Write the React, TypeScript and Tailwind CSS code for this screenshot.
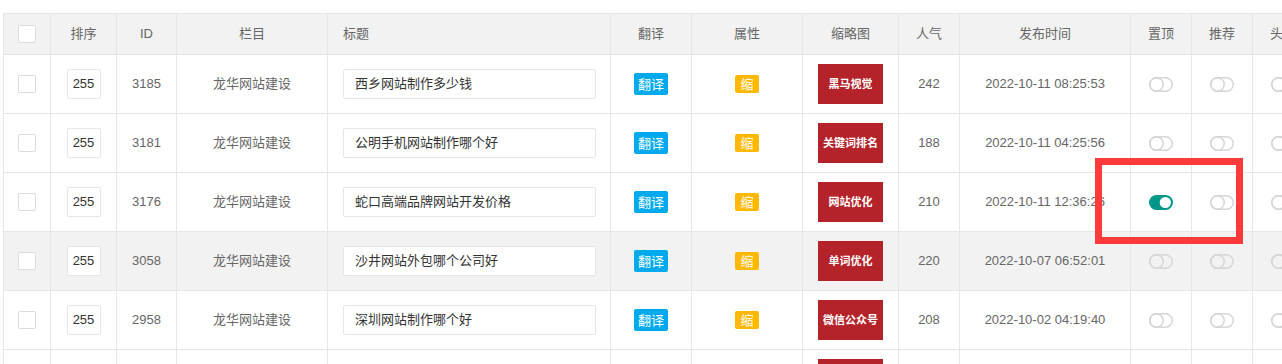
import React from "react";

const cols =
  "grid grid-cols-[47px_66px_60px_151px_283px_81px_111px_96px_61px_171px_61px_61px_61px]";

type Row = {
  id: string;
  title: string;
  thumb: string;
  hits: string;
  time: string;
  top?: boolean;
  hover?: boolean;
};

const rows: Row[] = [
  { id: "3185", title: "西乡网站制作多少钱", thumb: "黑马视觉", hits: "242", time: "2022-10-11 08:25:53" },
  { id: "3181", title: "公明手机网站制作哪个好", thumb: "关键词排名", hits: "188", time: "2022-10-11 04:25:56" },
  { id: "3176", title: "蛇口高端品牌网站开发价格", thumb: "网站优化", hits: "210", time: "2022-10-11 12:36:26", top: true },
  { id: "3058", title: "沙井网站外包哪个公司好", thumb: "单词优化", hits: "220", time: "2022-10-07 06:52:01", hover: true },
  { id: "2958", title: "深圳网站制作哪个好", thumb: "微信公众号", hits: "208", time: "2022-10-02 04:19:40" },
  { id: "2951", title: "宝安网站建设公司", thumb: "网站建设", hits: "196", time: "2022-10-01 10:12:33" },
];

function Toggle({ on }: { on?: boolean }) {
  if (on) {
    return (
      <svg width="24" height="15" viewBox="0 0 24 15">
        <rect x="0" y="0" width="24" height="15" rx="7.5" fill="#009688" />
        <circle cx="16.3" cy="7.5" r="5.6" fill="#ffffff" />
      </svg>
    );
  }
  return (
    <svg width="24" height="15" viewBox="0 0 24 15">
      <rect x="0.75" y="0.75" width="22.5" height="13.5" rx="6.75" fill="none" stroke="#d6d6d6" strokeWidth="1.5" />
      <circle cx="7.5" cy="7.5" r="6.75" fill="none" stroke="#d6d6d6" strokeWidth="1.5" />
    </svg>
  );
}

function Checkbox() {
  return <div className="w-[18px] h-[18px] bg-white border border-[#dcdcdc] rounded-[2px]" />;
}

const cell = "border-r border-b border-[#e6e6e6] flex items-center justify-center";

export default function App() {
  return (
    <div
      className="relative w-[1282px] h-[364px] overflow-hidden bg-white text-[13px] text-[#666]"
      style={{ fontFamily: '"Liberation Sans", "Noto Sans CJK SC", sans-serif' }}
    >
      <div className="mt-[13px] ml-[3px] w-max border-l border-t border-[#e6e6e6]">
        {/* header */}
        <div className={`${cols} h-[41px] bg-[#f2f2f2]`}>
          <div className={cell}>
            <Checkbox />
          </div>
          <div className={cell}>排序</div>
          <div className={cell}>ID</div>
          <div className={cell}>栏目</div>
          <div className="border-r border-b border-[#e6e6e6] flex items-center pl-[15px]">标题</div>
          <div className={cell}>翻译</div>
          <div className={cell}>属性</div>
          <div className={cell}>缩略图</div>
          <div className={cell}>人气</div>
          <div className={cell}>发布时间</div>
          <div className={cell}>置顶</div>
          <div className={cell}>推荐</div>
          <div className={cell}>头条</div>
        </div>
        {rows.map((r) => (
          <div key={r.id} className={`${cols} h-[59px] ${r.hover ? "bg-[#f2f2f2]" : "bg-white"}`}>
            <div className={cell}>
              <Checkbox />
            </div>
            <div className={cell}>
              <div className="w-[34px] h-[30px] bg-white border border-[#e6e6e6] rounded-[2px] flex items-center justify-center text-[#333]">
                255
              </div>
            </div>
            <div className={cell}>{r.id}</div>
            <div className={cell}>龙华网站建设</div>
            <div className="border-r border-b border-[#e6e6e6] flex items-center pl-[15px]">
              <div className="w-[253px] h-[30px] bg-white border border-[#e6e6e6] rounded-[2px] flex items-center pl-[11px] text-[#333]">
                {r.title}
              </div>
            </div>
            <div className={cell}>
              <span className="h-[22px] px-[4px] rounded-[2px] bg-[#01AAED] text-white flex items-center leading-none">
                翻译
              </span>
            </div>
            <div className={cell}>
              <span className="h-[18px] px-[5px] rounded-[2px] bg-[#FFB800] text-white flex items-center leading-none">
                缩
              </span>
            </div>
            <div className={cell}>
              <div className="w-[65px] h-[40px] bg-[#b5232a] text-white text-[11px] font-bold flex items-center justify-center">
                {r.thumb}
              </div>
            </div>
            <div className={cell}>{r.hits}</div>
            <div className={cell}>{r.time}</div>
            <div className={cell}>
              <Toggle on={r.top} />
            </div>
            <div className={cell}>
              <Toggle />
            </div>
            <div className={cell}>
              <Toggle />
            </div>
          </div>
        ))}
      </div>
      <div className="absolute left-[1095px] top-[158px] w-[148px] h-[86px] border-[7px] border-[#fe3a3a]" />
    </div>
  );
}
